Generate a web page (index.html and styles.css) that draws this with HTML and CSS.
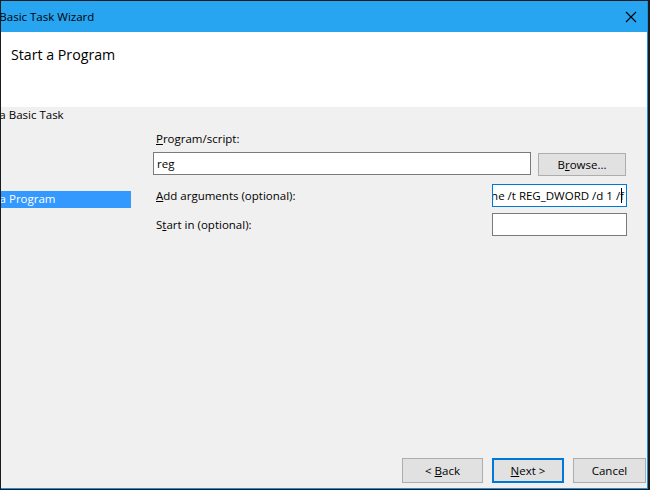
FILE: index.html
```html
<!DOCTYPE html>
<html>
<head>
<meta charset="utf-8">
<title>Create Basic Task Wizard</title>
<link rel="stylesheet" href="styles.css">
</head>
<body>
<div class="window">
  <div class="titlebar">
    <span class="title-text"><span class="cut-title">Create Basic Task Wizard</span></span>
    <svg class="close" width="12" height="12" viewBox="0 0 12 12">
      <path d="M1 1 L11 11 M11 1 L1 11" stroke="#000" stroke-width="1.1" fill="none"/>
    </svg>
  </div>
  <div class="header">
    <div class="header-title">Start a Program</div>
  </div>
  <div class="content">
    <div class="columns">
      <div class="sidebar">
        <div class="nav-item"><span class="cut-nav">Create a Basic Task</span></div>
        <div class="nav-item nav-sub selected"><span class="cut-sub">Start a Program</span></div>
      </div>
      <div class="main">
        <div class="label top-label"><u>P</u>rogram/script:</div>
        <div class="row-program">
          <div class="input input-program"><span class="val">reg</span></div>
          <div class="btn btn-browse"><span>B<u>r</u>owse...</span></div>
        </div>
        <div class="row-field row-args">
          <div class="label"><u>A</u>dd arguments (optional):</div>
          <div class="input input-small focused"><span class="scroll-text">ne /t REG_DWORD /d 1 /f</span><span class="caret"></span></div>
        </div>
        <div class="row-field row-start">
          <div class="label">S<u>t</u>art in (optional):</div>
          <div class="input input-small"></div>
        </div>
      </div>
    </div>
    <div class="footer">
      <div class="btn btn-back"><span>&lt; <u>B</u>ack</span></div>
      <div class="btn btn-next"><span><u>N</u>ext &gt;</span></div>
      <div class="btn btn-cancel"><span>Cancel</span></div>
    </div>
  </div>
</div>
</body>
</html>
```

FILE: styles.css
```css
html, body {
  margin: 0;
  padding: 0;
}
body {
  width: 650px;
  height: 490px;
  background: #1b1b1b;
  overflow: hidden;
  font-family: "Open Sans", "Noto Sans", sans-serif;
  font-size: 11.5px;
  color: #000;
}
.window {
  margin: 1px 0 0 1px;
  width: 646px;
  height: 487px;
  border-right: 1px solid #1e8fe3;
  border-bottom: 1px solid #1e8fe3;
  display: flex;
  flex-direction: column;
  background: #f0f0f0;
}
.titlebar {
  height: 31px;
  flex: none;
  background: #28a5f1;
  display: flex;
  align-items: center;
  justify-content: space-between;
  overflow: hidden;
}
.title-text {
  font-size: 11.5px;
  white-space: nowrap;
  overflow: hidden;
  display: block;
  line-height: 16px;
}
.cut-title {
  display: inline-block;
  margin-left: -40px;
}
.close {
  margin-right: 10px;
  display: block;
}
.header {
  height: 75px;
  flex: none;
  background: #fff;
}
.header-title {
  padding: 12px 0 0 10px;
  font-size: 14.2px;
  line-height: 22px;
}
.content {
  flex: 1;
  display: flex;
  flex-direction: column;
}
.columns {
  flex: 1;
  display: flex;
}
.sidebar {
  width: 130px;
  flex: none;
  display: flex;
  flex-direction: column;
}
.nav-item {
  height: 17px;
  line-height: 16px;
  white-space: nowrap;
  overflow: hidden;
}
.nav-item + .nav-item {
  margin-top: 67px;
}
.cut-nav {
  display: inline-block;
  margin-left: -40px;
}
.cut-sub {
  display: inline-block;
  margin-left: -30px;
}
.selected {
  background: #3399ff;
  color: #fff;
}
.main {
  flex: 1;
  padding: 23px 20px 0 22px;
  display: flex;
  flex-direction: column;
}
.label {
  line-height: 17px;
  white-space: nowrap;
  padding-left: 3px;
}
.top-label {
  margin-bottom: 5px;
}
.row-program {
  display: flex;
  gap: 7px;
  align-items: flex-start;
}
.input {
  box-sizing: border-box;
  height: 23px;
  background: #fff;
  border: 1px solid #7a7a7a;
  display: flex;
  align-items: center;
  white-space: nowrap;
  overflow: hidden;
}
.input-program {
  width: 378px;
  padding-left: 3px;
}
.btn {
  box-sizing: border-box;
  height: 23px;
  background: #e1e1e1;
  border: 1px solid #adadad;
  display: flex;
  align-items: center;
  justify-content: center;
  white-space: nowrap;
}
.btn-browse {
  width: 88px;
  margin-top: 1px;
}
.row-field {
  display: flex;
  justify-content: space-between;
  align-items: center;
}
.row-args {
  margin-top: 8px;
}
.row-start {
  margin-top: 6px;
}
.input-small {
  width: 135px;
  justify-content: flex-end;
  padding-right: 2px;
}
.focused {
  border-color: #0078d7;
}
.scroll-text {
  flex: none;
}
.caret {
  flex: none;
  width: 1px;
  height: 15px;
  background: #000;
  margin-left: -3px;
  margin-right: 2px;
}
.footer {
  flex: none;
  display: flex;
  justify-content: flex-end;
  gap: 9px;
  padding: 0 1px 5px 0;
}
.footer .btn {
  height: 25px;
}
.btn-back {
  width: 81px;
}
.btn-next {
  width: 72px;
  border: 2px solid #0078d7;
}
.btn-cancel {
  width: 73px;
}
```
